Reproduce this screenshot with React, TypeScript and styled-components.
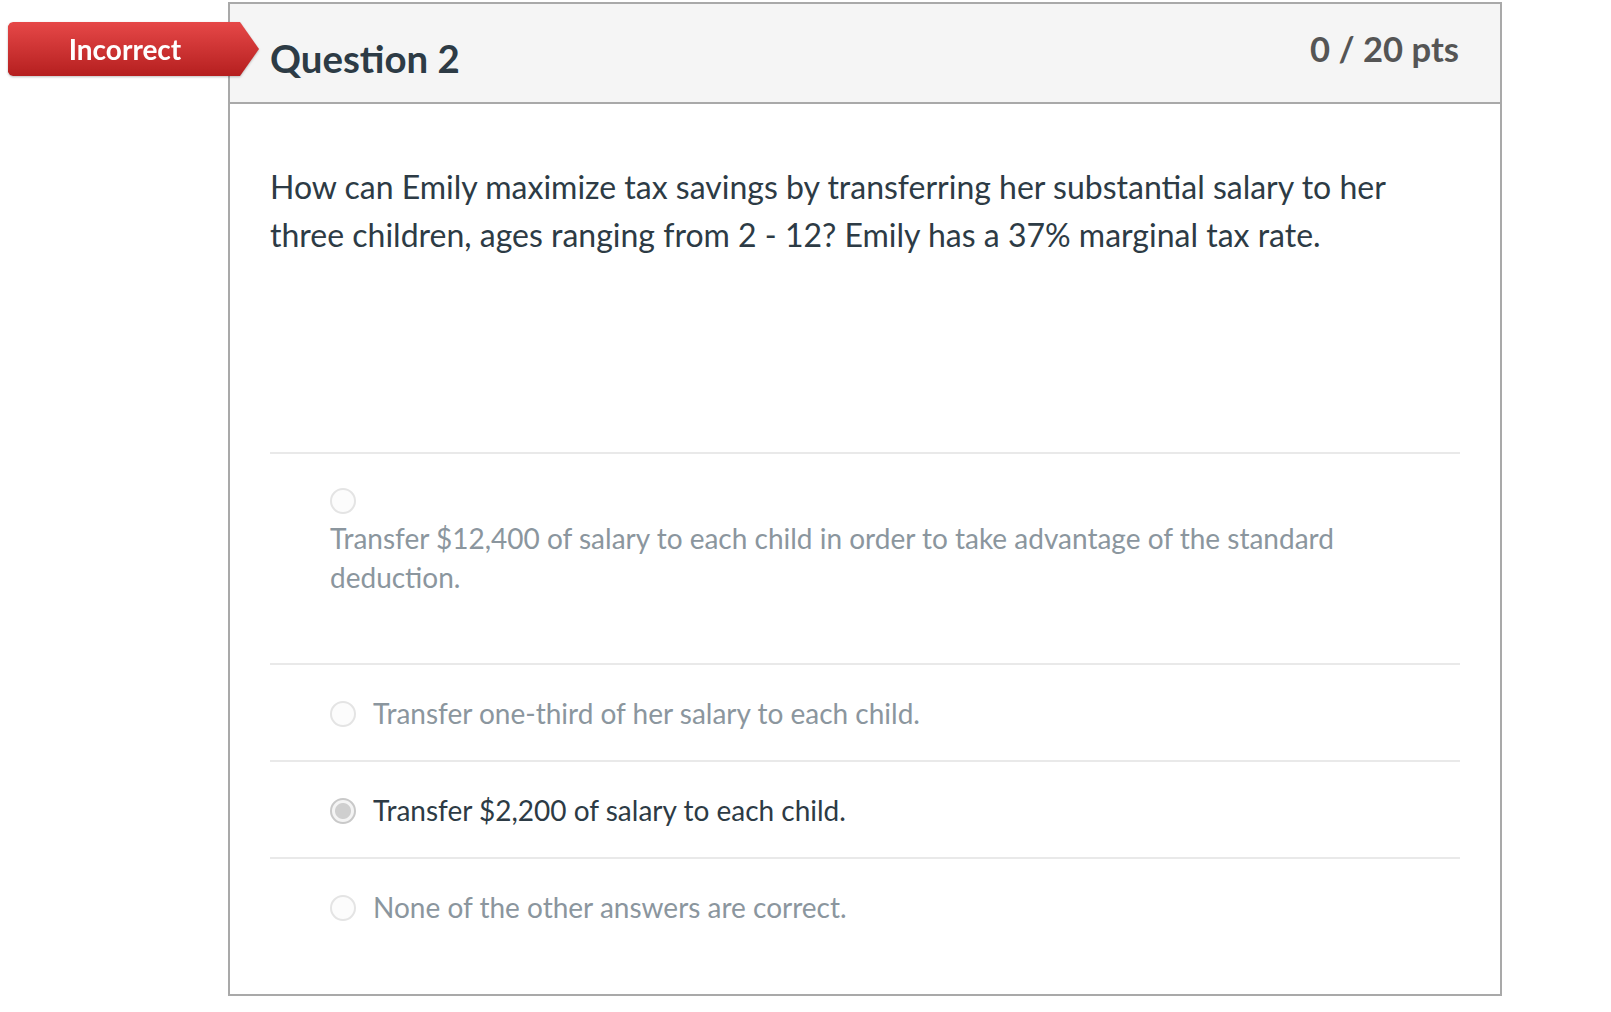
import React from "react";
import styled, { createGlobalStyle } from "styled-components";

const GlobalStyle = createGlobalStyle`
  html, body {
    margin: 0;
    padding: 0;
    background: #fff;
  }
  body {
    font-family: Lato, "Open Sans", "Liberation Sans", sans-serif;
    color: #2d3b45;
  }
`;

type AnswerType = {
  id: number
  text: string
  selected: boolean
  stacked?: boolean
}

const answers: AnswerType[] = [
  {
    id: 1,
    text: "Transfer $12,400 of salary to each child in order to take advantage of the standard deduction.",
    selected: false,
    stacked: true,
  },
  { id: 2, text: "Transfer one-third of her salary to each child.", selected: false },
  { id: 3, text: "Transfer $2,200 of salary to each child.", selected: true },
  { id: 4, text: "None of the other answers are correct.", selected: false },
];

const Card = styled.div`
  position: relative;
  margin: 2px 0 0 228px;
  width: 1274px;
  box-sizing: border-box;
  border: 2px solid #a9a9a9;
  background: #fff;
`;

// red ribbon hanging off the left edge of the card
const Badge = styled.div`
  position: absolute;
  left: -222px;
  top: 18px;
  width: 251px;
  height: 54px;
  display: flex;
  align-items: center;
  box-sizing: border-box;
  color: #fff;
  font-size: 28px;
  font-weight: 700;
  filter: drop-shadow(0 1px 1px rgba(0, 0, 0, 0.25));
  span {
    width: 234px;
    text-align: center;
  }
  &::before {
    content: "";
    position: absolute;
    inset: 0;
    z-index: -1;
    background: linear-gradient(#e64848, #b51f1f);
    clip-path: polygon(0 4px, 2px 1px, 5px 0, 232px 0, 251px 27px, 232px 54px, 5px 54px, 2px 53px, 0 50px);
  }
`;

const Header = styled.div`
  display: flex;
  justify-content: space-between;
  align-items: flex-start;
  height: 98px;
  padding: 0 41px 0 40px;
  background: #f5f5f5;
  border-bottom: 2px solid #a9a9a9;
`;

const Title = styled.h2`
  margin: 35px 0 0;
  font-size: 38.4px;
  line-height: 1;
  font-weight: 700;
  color: #2d3b45;
`;

const Points = styled.div`
  margin-top: 28px;
  font-size: 34.6px;
  line-height: 1;
  font-weight: 700;
  color: #555;
`;

const Body = styled.div`
  padding: 59px 40px 40px 40px;
`;

const QuestionText = styled.p`
  margin: 0 0 193px;
  padding-right: 20px;
  font-size: 32px;
  line-height: 48px;
  color: #2d3b45;
`;

const AnswerRow = styled.div<{ $stacked?: boolean }>`
  display: flex;
  flex-direction: ${p => (p.$stacked ? "column" : "row")};
  align-items: ${p => (p.$stacked ? "flex-start" : "center")};
  gap: ${p => (p.$stacked ? "0" : "17px")};
  padding: ${p => (p.$stacked ? "29px 0 66px 60px" : "29px 0 27px 60px")};
  border-top: 2px solid #e9e9e9;
`;

const RadioBox = styled.div<{ $stacked?: boolean }>`
  height: ${p => (p.$stacked ? "36px" : "auto")};
  display: flex;
  align-items: center;
`;

const Radio = styled.span<{ $checked: boolean }>`
  display: block;
  width: 26px;
  height: 26px;
  box-sizing: border-box;
  border-radius: 50%;
  border: 2px solid ${p => (p.$checked ? "#c9c9c9" : "#e4e4e4")};
  background: ${p => (p.$checked ? "radial-gradient(circle, #cfcfcf 0 7.5px, #f4f4f4 8.5px)" : "#fcfcfc")};
`;

const AnswerText = styled.div<{ $selected: boolean }>`
  font-size: 28px;
  line-height: 39px;
  color: ${p => (p.$selected ? "#2d3b45" : "#8b969e")};
`;

export default function App() {
  return (
    <>
      <GlobalStyle />
      <Card>
        <Badge><span>Incorrect</span></Badge>
        <Header>
          <Title>Question 2</Title>
          <Points>0 / 20 pts</Points>
        </Header>
        <Body>
          <QuestionText>
            How can Emily maximize tax savings by transferring her substantial salary to her three children, ages ranging from 2 - 12? Emily has a 37% marginal tax rate.
          </QuestionText>
          {answers.map(a => (
            <AnswerRow key={a.id} $stacked={a.stacked}>
              <RadioBox $stacked={a.stacked}>
                <Radio $checked={a.selected} />
              </RadioBox>
              <AnswerText $selected={a.selected}>{a.text}</AnswerText>
            </AnswerRow>
          ))}
        </Body>
      </Card>
    </>
  );
}
